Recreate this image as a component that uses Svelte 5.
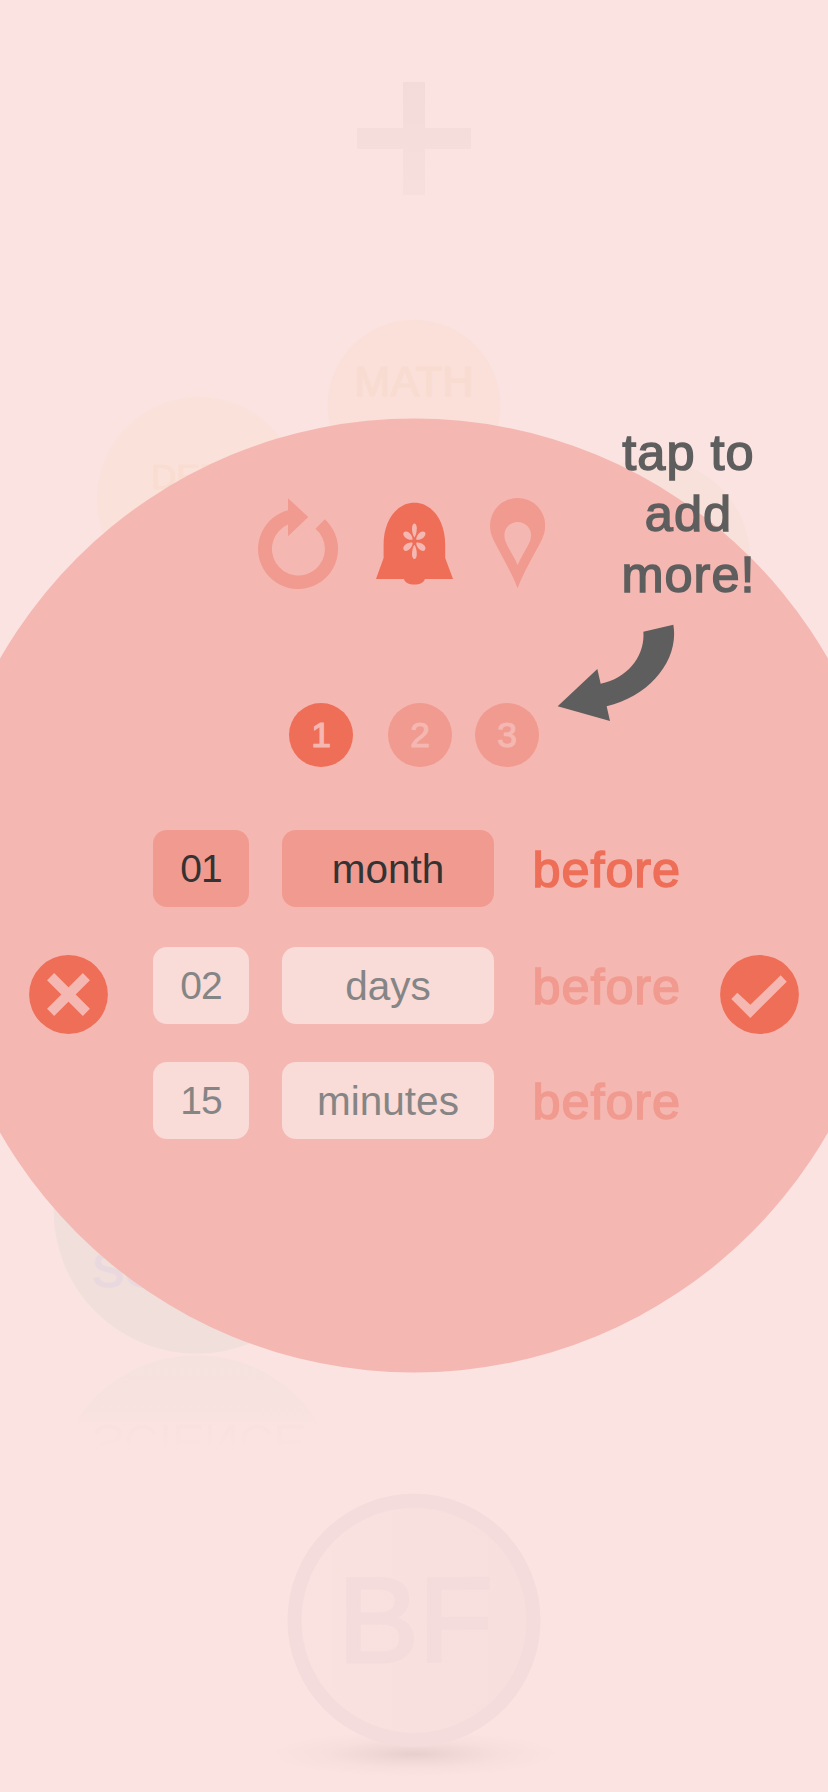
<script>
  const reminders = [
    { amount: '01', unit: 'month', active: true },
    { amount: '02', unit: 'days', active: false },
    { amount: '15', unit: 'minutes', active: false }
  ];
  const pages = [1, 2, 3];
  const sidePetals = [50, 130, 230, 310];
</script>

<main class="screen">
  <svg class="backdrop" viewBox="0 0 828 1792" aria-hidden="true">
    <defs>
      <linearGradient id="plusFade" x1="0" y1="81" x2="0" y2="195" gradientUnits="userSpaceOnUse">
        <stop offset="0" stop-color="#f3dbda" />
        <stop offset="1" stop-color="#f7dfde" />
      </linearGradient>
      <linearGradient id="mirrorFade" x1="0" y1="1354" x2="0" y2="1428" gradientUnits="userSpaceOnUse">
        <stop offset="0" stop-color="#f5e1de" />
        <stop offset="0.6" stop-color="#f7e2df" />
        <stop offset="1" stop-color="#fae3e0" />
      </linearGradient>
      <linearGradient id="mirrorText" x1="0" y1="1287" x2="0" y2="1258" gradientUnits="userSpaceOnUse">
        <stop offset="0" stop-color="#f9e1e0" />
        <stop offset="1" stop-color="#fae3e1" />
      </linearGradient>
      <linearGradient id="coinFill">
        <stop offset="0" stop-color="#fae2e1" />
        <stop offset="0.5" stop-color="#f8e0df" />
        <stop offset="1" stop-color="#f7dfde" />
      </linearGradient>
      <radialGradient id="shadow">
        <stop offset="0" stop-color="#e7cfce" />
        <stop offset="0.3" stop-color="#f0d8d7" />
        <stop offset="0.6" stop-color="#f7dfde" />
        <stop offset="1" stop-color="#fae3e1" />
      </radialGradient>
    </defs>

    <path d="M403 82h22v46h46v21h-46v46h-22v-46h-46v-21h46z" fill="url(#plusFade)" />

    <circle cx="199" cy="499" r="102" fill="#fae1da" />
    <text x="151" y="489" font-size="35" fill="#f9ddd0" stroke="#f9ddd0" stroke-width="0.6">DEBT</text>
    <circle cx="414" cy="406" r="86.3" fill="#fae0d9" />
    <text x="354.5" y="396" font-size="43" fill="#f9dcd1" stroke="#f9dcd1" stroke-width="1.4" textLength="119">MATH</text>
    <circle cx="650" cy="559" r="100" fill="#f8e1da" />

    <circle cx="196.7" cy="1210.7" r="143" fill="#f1dfdc" />
    <text x="92" y="1287" font-size="48" fill="#e9d9df" stroke="#e9d9df" stroke-width="1.5">SCIENCE</text>
    <path d="M73.1 1426.5A143 143 0 0 1 320.3 1426.5Z" fill="url(#mirrorFade)" />
    <g transform="translate(0 2712) scale(1 -1)">
      <text x="92" y="1287" font-size="48" fill="url(#mirrorText)">SCIENCE</text>
    </g>

    <ellipse cx="414" cy="1754" rx="145" ry="23" fill="url(#shadow)" />
    <circle cx="414" cy="1620.3" r="119.5" fill="url(#coinFill)" stroke="#f3dcdb" stroke-width="14" />
    <text x="338" y="1662" font-size="121" fill="#f3dcdb" stroke="#f3dcdb" stroke-width="3.2">BF</text>

    <circle cx="414" cy="895.5" r="477" fill="#f5b7b1" />
  </svg>

  <section class="editor">
    <nav class="tools">
      <button aria-label="Repeat">
        <svg width="80" height="91" viewBox="0 0 80 91">
          <path fill="#f19a8f" d="M30 .3L50.3 19 30 38.3V26.6A26.5 26.5 0 1 0 57.5 30.7L66.8 21.3A40 40 0 1 1 30 12.3Z" />
        </svg>
      </button>
      <button aria-label="Reminder">
        <svg width="77" height="91" viewBox="0 -5 77 91">
          <path fill="#ee6e57" d="M7.6 42C7.6 17 21 -.2 38.4 -.2S69.2 17 69.2 42V55L77 76H48.8C48 80 43 81.6 38.4 81.6S28.8 80 28 76H0L7.6 55Z" />
          <g transform="translate(38.4 38.2)" fill="#f5b7b1">
            {#each [0, 180] as angle}
              <path transform="rotate({angle})" d="M0-3.6C-1.5-5.5-2.4-9.5-2.4-13C-2.4-16-1.2-17.8 0-17.8S2.4-16 2.4-13C2.4-9.5 1.5-5.5 0-3.6Z" />
            {/each}
            {#each sidePetals as angle}
              <path transform="rotate({angle})" d="M0-2.4C-1.8-3.6-3.1-6.6-3.1-9.4C-3.1-12-1.6-13.8 0-13.8S3.1-12 3.1-9.4C3.1-6.6 1.8-3.6 0-2.4Z" />
            {/each}
          </g>
        </svg>
      </button>
      <button aria-label="Location">
        <svg width="55" height="91" viewBox="0 0 55 91">
          <path
            fill="#f19a8f"
            fill-rule="evenodd"
            d="M27.6 90.3C22 75 11 57 3.3 41.5C1 36.5 0 32.5 0 27.6A27.6 27.6 0 0 1 55.2 27.6C55.2 32.5 54 36.5 51.9 41.5C44 57 33 75 27.6 90.3ZM27.6 67C31 59 36 52 39.4 44.5C40.5 42 41 40 41 37.2A13.3 13.3 0 0 0 14.4 37.2C14.4 40 15 42 16 44.5C19 52 24.5 59 27.6 67Z"
          />
        </svg>
      </button>
    </nav>

    <div class="pager">
      {#each pages as page}
        <button class="page" class:active={page === 1}>{page}</button>
      {/each}
    </div>

    <div class="body">
      <button class="round" aria-label="Cancel">
        <svg width="79" height="79" viewBox="0 0 79 79">
          <circle cx="39.5" cy="39.5" r="39.4" fill="#ee6e57" />
          <path d="M21.6 21.6L57.4 57.4M57.4 21.6L21.6 57.4" stroke="#f5b7b1" stroke-width="10" />
        </svg>
      </button>

      <div class="rows">
        {#each reminders as item}
          <div class="row" class:active={item.active}>
            <span class="field amount">{item.amount}</span>
            <span class="field unit">{item.unit}</span>
            <span class="before">before</span>
          </div>
        {/each}
      </div>

      <button class="round" aria-label="Confirm">
        <svg width="79" height="79" viewBox="0 0 79 79">
          <circle cx="39.5" cy="39.5" r="39.4" fill="#ee6e57" />
          <path d="M11.3 44L17.3 37.7 30.3 49.8 60.7 20.3 66.7 26.7 30.3 63Z" fill="#f5b7b1" />
        </svg>
      </button>
    </div>
  </section>

  <aside class="callout">
    <p>tap to<br />add<br />more!</p>
    <svg width="120" height="100" viewBox="0 0 360 300">
      <path fill="#5e5e5e" d="M2 250L121 138 131 182C215 165 265 95 259 26L349 5C367 110 280 218 149 250L159 294Z" />
    </svg>
  </aside>
</main>

<style>
  :global(body) {
    background: #fae3e1;
  }
  .screen {
    position: relative;
    width: 828px;
    height: 1792px;
    overflow: hidden;
    background: #fae3e1;
    font-family: 'Liberation Sans', Arial, sans-serif;
  }
  .backdrop {
    position: absolute;
    inset: 0;
    width: 828px;
    height: 1792px;
  }
  button {
    display: block;
    padding: 0;
    border: 0;
    background: none;
    font: inherit;
  }
  svg {
    display: block;
  }
  .editor {
    position: relative;
    display: flex;
    flex-direction: column;
    padding-top: 498px;
  }
  .tools {
    display: flex;
    gap: 37.5px;
    height: 91px;
    padding-left: 258px;
  }
  .pager {
    display: flex;
    gap: 23px;
    margin-top: 114px;
    padding-left: 289px;
  }
  .page {
    width: 64px;
    height: 64px;
    border-radius: 50%;
    background: #f19a8f;
    color: #f5b7b1;
    font-size: 35.5px;
    line-height: 65px;
    text-align: center;
    -webkit-text-stroke: 1.2px currentColor;
  }
  .page.active {
    margin-right: 12px;
    background: #ee6e57;
  }
  .body {
    display: grid;
    grid-template-columns: 79px 611.6px 79px;
    margin-top: 63px;
    padding-left: 29.2px;
  }
  .round {
    margin-top: 124.5px;
    height: 79px;
  }
  .rows {
    display: grid;
    grid-template-rows: 117px 115px 77px;
    padding-left: 44.8px;
  }
  .row {
    display: grid;
    grid-template-columns: 96px 212px auto;
    column-gap: 33px;
    height: 77px;
  }
  .field {
    border-radius: 14px;
    background: #f9dbd8;
    color: #858585;
    font-size: 40.5px;
    line-height: 78px;
    height: 77px;
    text-align: center;
  }
  .amount {
    font-size: 39px;
    letter-spacing: -1px;
    line-height: 77px;
  }
  .row.active .field {
    background: #f19a8f;
    color: #333;
  }
  .before {
    height: 77px;
    padding-left: 5.5px;
    color: #f19a8f;
    font-size: 50.5px;
    letter-spacing: 0.9px;
    line-height: 79px;
    -webkit-text-stroke: 1.5px currentColor;
  }
  .row.active .before {
    color: #ee6e57;
  }
  .callout {
    position: absolute;
    left: 557px;
    top: 422px;
    width: 264px;
    color: #5e5e5e;
  }
  .callout p {
    width: 263px;
    margin: 0;
    font-size: 50.5px;
    letter-spacing: 1px;
    line-height: 61px;
    text-align: center;
    -webkit-text-stroke: 1.5px currentColor;
  }
  .callout svg {
    margin-top: 18px;
  }
</style>
